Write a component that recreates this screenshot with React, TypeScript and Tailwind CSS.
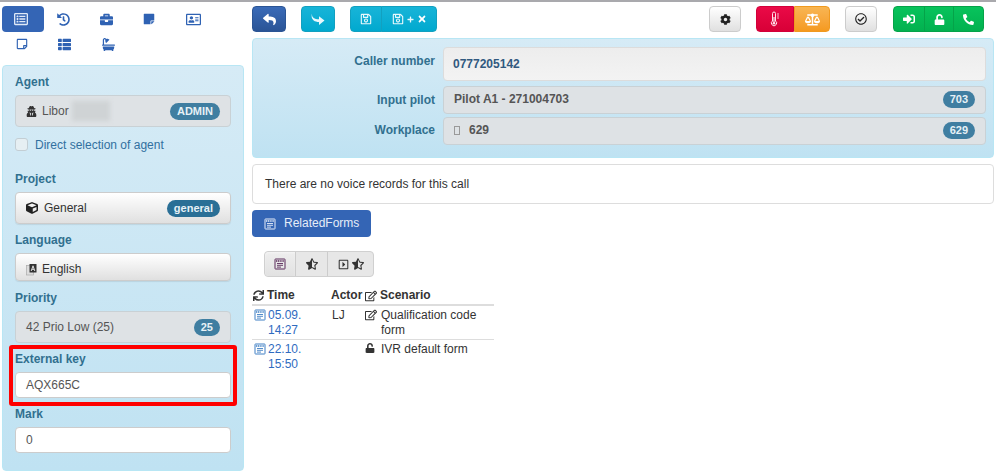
import React from "react";
import {
  FaRegListAlt, FaHistory, FaBriefcase, FaStickyNote, FaRegAddressCard, FaRegStickyNote, FaThList, FaBath,
  FaUserSecret, FaCube, FaReply, FaRegSave, FaPlus, FaTimes, FaCog,
  FaBalanceScale, FaRegCheckCircle, FaSignInAlt, FaUnlock, FaPhone, FaSync, FaRegEdit, FaStarHalfAlt, FaRegCaretSquareRight,
} from "react-icons/fa";

const FormIcon = ({ className = "" }: { className?: string }) => (
  <svg viewBox="0 0 12 12" width="12" height="12" className={className} fill="none" stroke="currentColor" strokeWidth="1">
    <rect x="1" y="1" width="10" height="10" rx="0.5" />
    <path d="M2 3h8" strokeWidth="1.6" strokeDasharray="1.2 0.6" />
    <path d="M3 5.5h6M3 7.3h6M3 9.1h4" strokeWidth="0.9" />
  </svg>
);

const ShareIcon = () => (
  <svg viewBox="0 0 14 14" width="14" height="14" fill="currentColor">
    <path d="M1 1.5C0.6 5.5 3 7.3 8 7.3V4.2L13.5 8.6 8 13V10C3 10 -0.6 7 1 1.5Z" />
  </svg>
);

const ThermoIcon = () => (
  <svg viewBox="0 0 10 16" width="10" height="16" fill="none" stroke="currentColor" strokeWidth="1">
    <path d="M2.5 10V2.5a1.5 1.5 0 0 1 3 0V10a2.6 2.6 0 1 1-3 0Z" />
    <path d="M4 6v6" strokeWidth="1.2" />
    <circle cx="4" cy="12.2" r="1.3" fill="currentColor" stroke="none" />
    <path d="M7 3h2M7 5h2M7 7h2" strokeWidth="0.8" />
  </svg>
);

const LangIcon = () => (
  <svg viewBox="0 0 11 13" width="11" height="13">
    <rect x="0.5" y="2.5" width="7" height="9.5" fill="#ddd" stroke="#aaa" strokeWidth="0.7" />
    <rect x="3.5" y="1" width="7" height="8.5" fill="#333" />
    <path d="M5.2 8 7 2.8 8.8 8M5.9 6.3h2.2" fill="none" stroke="#eee" strokeWidth="0.9" />
  </svg>
);

const Badge = ({ children, dark = false }: { children: React.ReactNode; dark?: boolean }) => (
  <span className={`rounded-full px-[7px] h-[17px] leading-[17px] text-[11px] font-bold text-[#e6f1f6] ${dark ? "bg-[#2a6f96]" : "bg-[#3f7ea1]"}`}>
    {children}
  </span>
);

const Label = ({ children, className = "" }: { children: React.ReactNode; className?: string }) => (
  <div className={`font-bold text-[#31708f] h-[15px] leading-[15px] ${className}`}>{children}</div>
);

const ReadOnly = ({ children, className = "" }: { children: React.ReactNode; className?: string }) => (
  <div className={`flex items-center justify-between rounded-[4px] border border-[#c9d1d5] bg-[#dee2e5] text-[#555] ${className}`}>
    {children}
  </div>
);

const SelectBtn = ({ children, className = "" }: { children: React.ReactNode; className?: string }) => (
  <div className={`flex items-center justify-between rounded-[4px] border border-[#ccc] bg-gradient-to-b from-white to-[#e0e0e0] text-[#333] pl-[10px] pr-[10px] shadow-[0_1px_1px_rgba(0,0,0,0.08)] ${className}`}>
    {children}
  </div>
);

const TextField = ({ value, className = "" }: { value: string; className?: string }) => (
  <div className={`flex items-center h-[26px] rounded-[4px] border border-[#ccc] bg-white text-[#555] pl-[10px] ${className}`}>{value}</div>
);

const tabIcons = [
  <FaRegListAlt size={14} />, <FaHistory size={13} />, <FaBriefcase size={13} />, <FaStickyNote size={12} />, <FaRegAddressCard size={15} />,
  <FaRegStickyNote size={12} className="ml-[2px]" />, <FaThList size={13} className="ml-px" />, <FaBath size={13} className="ml-[2px]" />,
];

const gradBlue = "bg-gradient-to-b from-[#17b4d8] to-[#00a9cf] border-[#12a0c0] text-[#e8f8fc]";
const gradGreen = "bg-gradient-to-b from-[#08c35c] to-[#02b14f] border-[#05a349] text-white";
const gradGrey = "bg-gradient-to-b from-white to-[#e0e0e0] border-[#ccc] text-[#333]";

const TBtn = ({ children, className = "" }: { children: React.ReactNode; className?: string }) => (
  <div className={`flex items-center justify-center h-[26px] border ${className}`}>{children}</div>
);

export default function App() {
  return (
    <div className="w-[996px] h-[472px] overflow-hidden bg-white text-[12px] leading-[15px] text-[#333] font-['Liberation_Sans',Arial,sans-serif]">
      <div className="h-[2px] bg-[#a9a9ad]" />
      <div className="flex pl-[2px] pt-[4px]">
        {/* Left column */}
        <div className="w-[242px] shrink-0">
          <div className="flex flex-wrap h-[59px] content-start text-[#2f62b3]">
            {tabIcons.map((ic, i) => (
              <div
                key={i}
                className={`w-[42px] mr-px h-[26px] flex items-center pl-[12px] rounded-[4px] ${i === 0 ? "bg-[#3465b5] text-[#dfe9f7]" : ""} ${i > 4 ? "-mt-px" : ""}`}
              >
                {ic}
              </div>
            ))}
          </div>
          <div className="h-[406px] rounded-[4px] border border-[#b8e6f4] bg-gradient-to-b from-[#d6ebf6] to-[#bfe2f2] px-[12px] pt-[9px]">
            <Label>Agent</Label>
            <ReadOnly className="mt-[5px] h-[32px] pl-[10px] pr-[10px]">
              <span className="flex items-center gap-[5px]">
                <FaUserSecret size={11} className="text-[#333]" />
                <span className="text-[#555]">Libor</span>
                <span className="w-[38px] h-[20px] -ml-[2px] bg-[#cfd3d5] blur-[2px]" />
              </span>
              <Badge>ADMIN</Badge>
            </ReadOnly>
            <div className="mt-[11px] h-[13px] flex items-center gap-[7px] text-[#31709f]">
              <span className="w-[13px] h-[13px] rounded-[3px] border border-[#c3ced4] bg-[#e6eff3]" />
              <span className="pt-[2px]">Direct selection of agent</span>
            </div>
            <Label className="mt-[21px]">Project</Label>
            <SelectBtn className="mt-[5px] h-[32px]">
              <span className="flex items-center gap-[6px]">
                <FaCube size={12} className="text-[#222]" />
                General
              </span>
              <Badge dark>general</Badge>
            </SelectBtn>
            <Label className="mt-[9px]">Language</Label>
            <SelectBtn className="mt-[5px] h-[28px] pt-[5px]">
              <span className="flex items-center gap-[5px]">
                <LangIcon />
                English
              </span>
            </SelectBtn>
            <Label className="mt-[10px]">Priority</Label>
            <ReadOnly className="mt-[5px] h-[32px] pl-[10px] pr-[10px]">
              <span>42 Prio Low (25)</span>
              <Badge>25</Badge>
            </ReadOnly>
            <div className="-mx-[6px] mt-[2px] h-[61px] rounded-[3px] border-[4px] border-[#ff0000] px-[2px] pt-[3px]">
              <Label>External key</Label>
              <TextField value="AQX665C" className="mt-[5px]" />
            </div>
            <Label className="mt-px">Mark</Label>
            <TextField value="0" className="mt-[5px]" />
          </div>
        </div>

        {/* Right column */}
        <div className="w-[742px] ml-[8px] shrink-0">
          <div className="flex h-[26px]">
            <TBtn className="w-[34px] rounded-[4px] bg-gradient-to-b from-[#3a6bb8] to-[#2a5496] border-[#2b5595] text-white"><FaReply size={13} /></TBtn>
            <TBtn className={`w-[34px] ml-[15px] rounded-[4px] ${gradBlue}`}><ShareIcon /></TBtn>
            <TBtn className={`w-[32px] ml-[15px] rounded-l-[4px] ${gradBlue}`}><FaRegSave size={12} /></TBtn>
            <TBtn className={`w-[56px] -ml-px rounded-r-[4px] gap-[3px] ${gradBlue}`}>
              <FaRegSave size={12} /><FaPlus size={7} /><FaTimes size={10} className="text-white" />
            </TBtn>
            <TBtn className={`w-[32px] ml-[272px] rounded-[4px] ${gradGrey}`}><FaCog size={11} className="text-[#222]" /></TBtn>
            <TBtn className="w-[38px] ml-[15px] rounded-l-[4px] bg-gradient-to-b from-[#ea0a47] to-[#d80037] border-[#d3003a] text-[#ffe3ea]"><ThermoIcon /></TBtn>
            <TBtn className="w-[36px] rounded-r-[4px] bg-gradient-to-b from-[#f8b552] to-[#f59a1e] border-[#f09a20] text-white"><FaBalanceScale size={15} /></TBtn>
            <TBtn className={`w-[32px] ml-[15px] rounded-[4px] ${gradGrey}`}><FaRegCheckCircle size={12} className="text-[#222]" /></TBtn>
            <TBtn className={`w-[32px] ml-[16px] rounded-l-[4px] ${gradGreen}`}><FaSignInAlt size={12} /></TBtn>
            <TBtn className={`w-[30px] -ml-px ${gradGreen}`}><FaUnlock size={11} /></TBtn>
            <TBtn className={`w-[31px] -ml-px rounded-r-[4px] ${gradGreen}`}><FaPhone size={11} className="-scale-x-100" /></TBtn>
          </div>

          <div className="mt-[6px] h-[120px] rounded-[4px] border border-[#b8e6f4] bg-gradient-to-b from-[#d6ebf6] to-[#bfe2f2] pt-[8px] pr-[7px]">
            <div className="flex">
              <div className="w-[182px] text-right font-bold text-[#31708f] pt-[7px]">Caller number</div>
              <div className="ml-[8px] flex-1 h-[34px] flex items-center rounded-[4px] border border-[#dcdcdc] bg-gradient-to-b from-[#ededed] to-[#f3f3f3] pl-[9px] font-bold text-[#31597f]">
                0777205142
              </div>
            </div>
            <div className="flex mt-[5px]">
              <div className="w-[182px] text-right font-bold text-[#31708f] pt-[7px]">Input pilot</div>
              <ReadOnly className="ml-[8px] flex-1 h-[28px] pl-[10px] pr-[10px] font-bold pb-[2px]">
                <span>Pilot A1 - 271004703</span>
                <Badge>703</Badge>
              </ReadOnly>
            </div>
            <div className="flex mt-[3px]">
              <div className="w-[182px] text-right font-bold text-[#31708f] pt-[6px]">Workplace</div>
              <ReadOnly className="ml-[8px] flex-1 h-[28px] pl-[10px] pr-[10px] font-bold pb-[2px]">
                <span className="flex items-center gap-[9px]">
                  <span className="w-[6px] h-[9px] border border-[#999]" />
                  629
                </span>
                <Badge>629</Badge>
              </ReadOnly>
            </div>
          </div>

          <div className="mt-[6px] h-[40px] flex items-center rounded-[4px] border border-[#ddd] bg-white pl-[12px]">
            There are no voice records for this call
          </div>

          <div className="mt-[6px] w-[119px] h-[27px] flex items-center gap-[8px] pl-[12px] rounded-[4px] bg-[#3465b5] text-[#e6edf8]">
            <FormIcon />
            <span>RelatedForms</span>
          </div>

          <div className="mt-[14px] ml-[12px] w-[110px] h-[26px] flex rounded-[4px] border border-[#d0d0d0] bg-[#e7e7e7] text-[#333]">
            <div className="w-[31px] flex items-center justify-center rounded-l-[4px] bg-gradient-to-b from-[#eee] to-[#e2e2e2] border-r border-[#ccc] shadow-[inset_0_1px_2px_rgba(255,255,255,0.4)]">
              <FormIcon className="text-[#5a2a5a]" />
            </div>
            <div className="w-[32px] flex items-center justify-center border-r border-[#ccc]"><FaStarHalfAlt size={12} /></div>
            <div className="flex-1 flex items-center justify-center gap-[3px]">
              <FaRegCaretSquareRight size={11} /><FaStarHalfAlt size={12} />
            </div>
          </div>

          <table className="mt-[10px] w-[242px] table-fixed border-collapse">
            <colgroup>
              <col className="w-[79px]" />
              <col className="w-[32px]" />
              <col className="w-[17px]" />
              <col />
            </colgroup>
            <thead>
              <tr className="border-b-2 border-[#ddd] h-[18px] text-left">
                <th className="p-0 font-bold"><span className="flex items-center gap-[3px] pl-px"><FaSync size={11} />Time</span></th>
                <th className="p-0 font-bold">Actor</th>
                <th className="p-0 font-bold"><FaRegEdit size={12} className="ml-[2px]" /></th>
                <th className="p-0 font-bold">Scenario</th>
              </tr>
            </thead>
            <tbody>
              <tr className="border-b border-[#ddd] align-top">
                <td className="p-0 pt-[2px] pb-[1px]">
                  <div className="flex gap-[2px] text-[#2f6bbf] pl-[2px]">
                    <FormIcon className="mt-px shrink-0 text-[#3f7fc4]" />
                    <span className="w-[36px]">05.09. 14:27</span>
                  </div>
                </td>
                <td className="p-0 pt-[2px] pl-px">LJ</td>
                <td className="p-0 pt-[3px]"><FaRegEdit size={12} className="ml-[2px]" /></td>
                <td className="p-0 pt-[2px] pl-px">Qualification code form</td>
              </tr>
              <tr className="align-top">
                <td className="p-0 pt-[2px]">
                  <div className="flex gap-[2px] text-[#2f6bbf] pl-[2px]">
                    <FormIcon className="mt-px shrink-0 text-[#3f7fc4]" />
                    <span className="w-[36px]">22.10. 15:50</span>
                  </div>
                </td>
                <td className="p-0" />
                <td className="p-0 pt-[3px]"><FaUnlock size={10} className="ml-[2px]" /></td>
                <td className="p-0 pt-[2px] pl-px">IVR default form</td>
              </tr>
            </tbody>
          </table>
        </div>
      </div>
    </div>
  );
}
